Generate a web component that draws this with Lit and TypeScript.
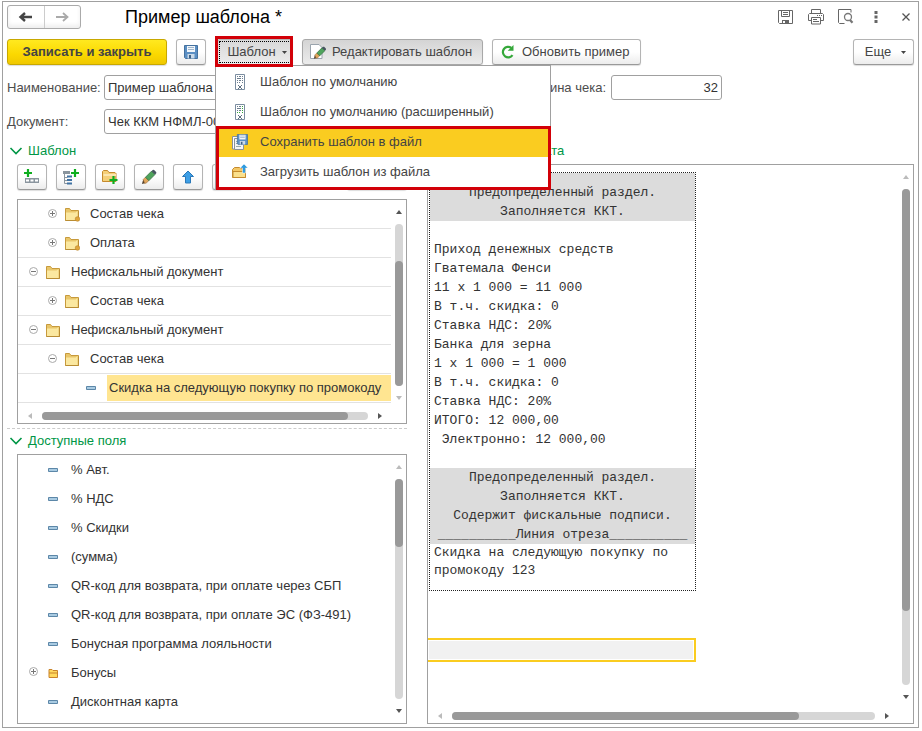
import { LitElement, html, css, svg, nothing } from "lit";
import { customElement, property, state } from "lit/decorators.js";
import { classMap } from "lit/directives/class-map.js";
import { styleMap } from "lit/directives/style-map.js";

const folderBody = svg`
  <path d="M1.500 2.500h4l1.500 2h7.500v10h-13z" fill="#e9c66a" stroke="#c79a3c"/>
  <path d="M2 14v-7.500h9.500l2-1.500v9z" fill="#fbe8a0"/>
  <path d="M1.500 14.500h13v-9" fill="none" stroke="#b98d34"/>`;

const floppy = (x: number, y: number) => svg`
  <g transform="translate(${x} ${y})">
    <path d="M.5.5h13v13h-12l-1-1z" fill="#5b8fc4" stroke="#44719f"/>
    <path d="M3 1h8v6h-8z" fill="#f2f6fa"/>
    <path d="M4 2.500h6M4 4.500h6" stroke="#9fb6cc"/>
    <path d="M3.500 9h7v4.500h-7z" fill="#c9d9e8"/>
    <path d="M5 10h2v3.500h-2z" fill="#3d6288"/>
  </g>`;

const pencil = svg`
  <path d="M1 15l1.200-4.500 3.300 3.300z" fill="#4a3b2a"/>
  <path d="M2.200 10.500l2.300-2.300 3.400 3.400-2.400 2.200-1.800.7z" fill="#e0a65c" stroke="#9a6a34" stroke-width=".6"/>
  <path d="M4.500 8.200l6-6 3.400 3.400-6 6z" fill="#4fa45c" stroke="#2f6b3c" stroke-width=".8"/>
  <path d="M10.500 2.200l1.200-1.200q.7-.5 1.400 0l2 2q.5.700 0 1.400l-1.200 1.200z" fill="#475560"/>`;

const receipt = (mark: string) => svg`
  <path d="M3.500.5h9v15h-9z" fill="#fff" stroke="#7b8da0"/>
  <path d="M5 2.500h1M7 2.500h2M5 4.500h4M5 6.500h1M7 6.500h2" stroke="#6c7d8e"/>
  <path d="M5 8.500h1M7 8.500h1M10 2.500h1M10 4.500h1M10 6.500h1M10 8.500h1" stroke="${mark}"/>
  <path d="M6 11l4 4M10 11l-4 4M7.500 12.500h1" stroke="#5d6f80"/>`;

const icons = {
  back: svg`<path d="M2 8h12M7 4L2.500 8L7 12" fill="none" stroke="#444" stroke-width="2.400"/>`,
  forward: svg`<path d="M2 8h12M9 4l4.500 4L9 12" fill="none" stroke="#aaa" stroke-width="1.800"/>`,
  saveOutline: svg`
    <path d="M.5 1.500h14v13h-13l-1-1z" fill="none" stroke="#666"/>
    <path d="M3.500 1.500v6h8v-6M5 3.500h5M5 5.500h5" fill="none" stroke="#666"/>
    <path d="M4 11h7v4h-7z" fill="#666"/><path d="M5 12h2v2h-2z" fill="#fff"/>`,
  print: svg`
    <path d="M3.500 4.500v-4h9v4M3.500 11.500h-3v-6l1-1h13l1 1v6h-3" fill="none" stroke="#666"/>
    <path d="M3.500 8.500h9v6.500h-9zM5 10.500h4M5 12.500h6M9 6.500h1M11 6.500h1M13 6.500h1" fill="none" stroke="#666"/>`,
  preview: svg`
    <path d="M6.500 14.500h-5l-1-1v-13h12.500v3" fill="none" stroke="#666"/>
    <circle cx="10" cy="8" r="3.500" fill="none" stroke="#777" stroke-width="1.300"/>
    <path d="M12 11l2.500 2.800" stroke="#777" stroke-width="2.200"/>`,
  more: svg`<path d="M6.500 2h3v3h-3zM6.500 6.500h3v3h-3zM6.500 11h3v3h-3z" fill="#666"/>`,
  close: svg`<path d="M4.500 4.500l7 7M11.500 4.500l-7 7" stroke="#555" stroke-width="1.300"/>`,
  save: floppy(1, 1),
  edit: svg`
    <path d="M.5.500h8.500l3 3v11h-11.500z" fill="#fff" stroke="#9aa4ad"/>
    <g transform="translate(3 2) scale(.85)">${pencil}</g>`,
  refresh: svg`
    <path d="M12.500 11.200A5.300 5.300 0 1 1 11.300 3.800" fill="none" stroke="#35a83a" stroke-width="2.200"/>
    <path d="M13.500 1v5.800h-5.800z" fill="#35a83a"/>`,
  addField: svg`
    <path d="M1 9h14v5h-14z" fill="#8a959e"/>
    <path d="M2 11.500h3M6.500 11.500h3M11 11.500h3" stroke="#fff" stroke-width="2"/>
    <path d="M4 0v9M0 4.500h8.500" stroke="#fff" stroke-width="4"/>
    <path d="M4 0v8M0 4h8" stroke="#0fae20" stroke-width="2.200"/>`,
  addGroup: svg`
    <path d="M0 2h7v3h-7z" fill="#8a959e"/>
    <path d="M1.500 5v9.500h3M1.500 8.500h3M1.500 11.500h3" fill="none" stroke="#8a959e"/>
    <path d="M4 7.500h5M4 11h5M4 14.500h5" stroke="#3f72a3" stroke-width="2"/>
    <path d="M12 0v8M8 4h8" stroke="#0fae20" stroke-width="2.200"/>`,
  addFolder: svg`
    <path d="M.5 12.500v-10l1-1h4l1.500 2h6l1 1v8z" fill="#f5cf78" stroke="#c48a2e"/>
    <path d="M1.500 6h12.500" stroke="#fbe6b0" stroke-width="2"/>
    <path d="M11.500 7v8M7.500 11h8" stroke="#0fae20" stroke-width="2.200"/>`,
  pencil,
  up: svg`<path d="M8 2l5.500 5.500h-3v6.500h-5v-6.500h-3z" fill="#3d9fe6" stroke="#2a78b8"/>`,
  down: svg`<path d="M8 14l5.500-5.500h-3v-6.500h-5v6.500h-3z" fill="#3d9fe6" stroke="#2a78b8"/>`,
  receipt: receipt("#6c7d8e"),
  receiptGreen: receipt("#35a83a"),
  saveFile: svg`
    <path d="M.5 2.500h8v12.500h-8z" fill="#fff" stroke="#8a9199"/>
    <path d="M2.500 4.500h9v11h-9z" fill="#f4f5f6" stroke="#8a9199"/>
    <path d="M4 7.500h3M4 9.500h3M4 12.500h5" stroke="#9aa"/>
    <g transform="translate(5 0) scale(.78)">${floppy(0, 0)}</g>`,
  loadFile: svg`
    <path d="M.5 13.500v-8l2-2h5l1 1h5v9z" fill="#f3c765" stroke="#c48a2e"/>
    <path d="M1 7.500h12.500v6h-12.500z" fill="#fbe08c" stroke="#c48a2e"/>
    <path d="M12 0l4 4h-2.500v5h-3v-5h-2.500z" fill="#2f9be0" stroke="#fff" stroke-width=".5"/>`,
  folder: folderBody,
  folderDot: svg`${folderBody}<circle cx="13.500" cy="13" r="2.300" fill="#e0a63c" stroke="#b98328" stroke-width=".6"/>`,
  folderSmall: svg`
    <path d="M4 12.500v-8h3l1 1h4.500v7z" fill="#ffd95e" stroke="#c9832b"/>
    <path d="M4 8h8.500" stroke="#c9832b"/>`,
  item: svg`
    <path d="M3.500 6.500h9v3h-9z" fill="#a9cbe2" stroke="#5c87a8" stroke-linejoin="round"/>`,
};

type IconName = keyof typeof icons;

const icon = (name: IconName) => html`<svg class="icon" viewBox="0 0 16 16" aria-hidden="true">${icons[name]}</svg>`;

interface TreeRow {
  text: string;
  level: number;
  icon: IconName;
  expand?: "plus" | "minus";
  selected?: boolean;
}

const templateRows: TreeRow[] = [
  { text: "Состав чека", level: 2, icon: "folderDot", expand: "plus" },
  { text: "Оплата", level: 2, icon: "folderDot", expand: "plus" },
  { text: "Нефискальный документ", level: 1, icon: "folder", expand: "minus" },
  { text: "Состав чека", level: 2, icon: "folder", expand: "plus" },
  { text: "Нефискальный документ", level: 1, icon: "folder", expand: "minus" },
  { text: "Состав чека", level: 2, icon: "folder", expand: "minus" },
  { text: "Скидка на следующую покупку по промокоду", level: 3, icon: "item", selected: true },
];

const fieldRows: TreeRow[] = [
  { text: "% Авт.", level: 1, icon: "item" },
  { text: "% НДС", level: 1, icon: "item" },
  { text: "% Скидки", level: 1, icon: "item" },
  { text: "(сумма)", level: 1, icon: "item" },
  { text: "QR-код для возврата, при оплате через СБП", level: 1, icon: "item" },
  { text: "QR-код для возврата, при оплате ЭС (ФЗ-491)", level: 1, icon: "item" },
  { text: "Бонусная программа лояльности", level: 1, icon: "item" },
  { text: "Бонусы", level: 1, icon: "folderSmall", expand: "plus" },
  { text: "Дисконтная карта", level: 1, icon: "item" },
];

const menuItems: { text: string; icon: IconName }[] = [
  { text: "Шаблон по умолчанию", icon: "receipt" },
  { text: "Шаблон по умолчанию (расширенный)", icon: "receiptGreen" },
  { text: "Сохранить шаблон в файл", icon: "saveFile" },
  { text: "Загрузить шаблон из файла", icon: "loadFile" },
];

const saleLines = `
Приход денежных средств
Гватемала Фенси
11 x 1 000 = 11 000
В т.ч. скидка: 0
Ставка НДС: 20%
Банка для зерна
1 x 1 000 = 1 000
В т.ч. скидка: 0
Ставка НДС: 20%
ИТОГО: 12 000,00
 Электронно: 12 000,00

`;

@customElement("scroll-bar")
export class ScrollBar extends LitElement {
  @property({ type: Boolean, reflect: true }) horizontal = false;
  @property({ type: Number }) from = 0;
  @property({ type: Number }) size = 50;

  static styles = css`
    :host { display: flex; flex-direction: column; align-items: center; width: 10px; }
    :host([horizontal]) { flex-direction: row; width: auto; height: 8px; }
    .track { flex: 1; display: flex; flex-direction: column; width: 8px; border-radius: 4px; background: #d6d6d6; }
    :host([horizontal]) .track { flex-direction: row; width: auto; height: 8px; }
    .thumb { border-radius: 4px; background: #999; }
    .arrow { flex: none; width: 24px; height: 24px; fill: #555; }
    .off { fill: #bbb; }
  `;

  render() {
    const side = this.horizontal ? "width" : "height";
    const atStart = this.from === 0;
    const atEnd = this.from + this.size >= 100;
    const first = this.horizontal ? "M14 9v6l-4-3z" : "M9 14h6l-3-4z";
    const last = this.horizontal ? "M10 9v6l4-3z" : "M9 10h6l-3 4z";
    return html`
      <svg class=${classMap({ arrow: true, off: atStart })} viewBox="0 0 24 24"><path d=${first} /></svg>
      <div class="track">
        <div style=${styleMap({ [side]: `${this.from}%` })}></div>
        <div class="thumb" style=${styleMap({ [side]: `${this.size}%` })}></div>
      </div>
      <svg class=${classMap({ arrow: true, off: atEnd })} viewBox="0 0 24 24"><path d=${last} /></svg>
    `;
  }
}

@customElement("app-root")
export class AppRoot extends LitElement {
  @state() private menuOpen = true;

  static styles = css`
    :host {
      display: block;
      box-sizing: border-box;
      min-height: 100vh;
      padding: 1px 3px 3px 2px;
      background: #fff;
      color: #333;
      font: 13px/20px "Liberation Sans", Arial, sans-serif;
    }
    * { box-sizing: border-box; }
    button, input { font: inherit; color: inherit; margin: 0; }
    h1, h2, ul, pre, p { margin: 0; padding: 0; font: inherit; list-style: none; }
    .icon { width: 16px; height: 16px; flex: none; display: block; }

    .window { border: 1px solid #a0a0a0; padding: 3px 4px; }

    header { display: flex; align-items: center; height: 24px; margin-bottom: 10px; }
    .nav { display: flex; width: 74px; height: 24px; border: 1px solid #aaa; border-radius: 3px; box-shadow: inset 0 -3px 4px #eee; }
    .nav button { flex: 1; display: flex; align-items: center; justify-content: center; border: 0; background: none; padding: 0; }
    .nav button + button { border-left: 1px solid #ccc; }
    h1 { flex: 1; margin-left: 44px; font-size: 18px; line-height: 24px; color: #000; }
    .tools { display: flex; gap: 14px; }
    .tools button { border: 0; padding: 0; background: none; }

    .bar { display: flex; align-items: center; gap: 9px; height: 26px; }
    .btn {
      display: flex; align-items: center; justify-content: center; gap: 6px;
      height: 26px; padding: 0;
      border: 1px solid #b4b4b4; border-bottom-color: #999; border-radius: 3px;
      background: linear-gradient(#fff 50%, #ececec);
      box-shadow: 0 1px 1px #ddd;
      color: #444; white-space: nowrap;
    }
    .square { width: 30px; }
    .primary { width: 160px; font-weight: bold; background: linear-gradient(#ffe920, #fbd800 60%, #f0c800); border-color: #c8a800; }
    .pressed { background: linear-gradient(#d4d4d4, #ececec); border-color: #a8a8a8; }
    .edit { width: 181px; justify-content: flex-start; padding-left: 7px; }
    .refresh { width: 149px; justify-content: flex-start; padding-left: 7px; }
    .more { width: 61px; margin-left: auto; gap: 10px; padding-left: 4px; }
    .caret { width: 5px; height: 3px; fill: #444; }

    .anchor { position: relative; margin-left: 2px; }
    .anchor .btn { width: 76px; padding-left: 4px; background: linear-gradient(#d8d8d8, #ececec); outline: 1px dotted #000; outline-offset: -3px; }
    .anchor::after { content: ""; position: absolute; inset: -3px 0 -2px -2px; border: 3px solid #d20008; pointer-events: none; z-index: 3; }
    .menu {
      position: absolute; z-index: 2; top: 26px; left: -2px; width: 336px; padding: 1px 0 2px;
      border: 1px solid #a0a0a0; background: #fff;
    }
    .menu button {
      display: flex; align-items: center; gap: 12px; width: 100%; height: 30px; padding: 0 16px;
      border: 0; background: none; color: #444; text-align: left;
    }
    .menu .current { background: #facc20; }
    .marked { position: relative; }
    .marked::after { content: ""; position: absolute; inset: -1px -1px -3px 0; border: 3px solid #d20008; pointer-events: none; }

    .form { display: grid; grid-template-columns: 92px 1fr auto 111px; gap: 9px 5px; max-width: 715px; margin: 10px 0 7px; align-items: center; color: #4d4d4d; }
    .form input { width: 100%; min-width: 0; height: 25px; padding: 0 3px; border: 1px solid #a0a0a0; border-radius: 3px; background: #fff; color: #333; outline: none; }
    .form .num { text-align: right; }
    .len { padding-left: 16px; }

    .main { display: grid; grid-template-columns: 400fr 487fr; gap: 20px; }
    .col { display: flex; flex-direction: column; min-width: 0; }
    .section { display: flex; align-items: center; gap: 5px; height: 20px; margin: 0 0 3px 2px; color: #009646; }
    .chev { width: 14px; height: 8px; fill: none; stroke: #009646; stroke-width: 1.6; }
    .cmds { display: flex; gap: 9px; margin: 0 0 9px 10px; height: 26px; }
    .cmds .more { width: 60px; }
    .panel { border: 1px solid #a0a0a0; background: #fff; min-width: 0; }
    .left .panel { margin-left: 10px; }
    .view { display: grid; grid-template-columns: minmax(0, 1fr) 10px; gap: 3px; padding-right: 2px; }
    .panel .horiz { margin: 0 14px 3px 0; }
    .tree .horiz { margin-top: 9px; }
    .tree .vert { margin-bottom: -7px; }
    .right .vert { margin-bottom: 3px; }
    .row { display: flex; align-items: center; height: 29px; padding-left: 9px; color: #333; white-space: nowrap; }
    .tree .row { border-bottom: 1px solid #e2e2e2; }
    .level2 { padding-left: 28px; }
    .level3 { padding-left: 47px; }
    .toggle { flex: none; width: 13px; height: 13px; margin-right: 5px; padding: 0; border: 0; background: none; display: flex; }
    .toggle svg { width: 13px; height: 13px; fill: none; stroke: #aaa; }
    .toggle .sign { stroke: #777; }
    .row .text { margin-left: 8px; padding: 0 2px; line-height: 26px; }
    .row .selected { flex: 1; background: #ffe591; }
    .split { border: 0; border-top: 1px dashed #ccc; width: 100%; margin: 4px 0 2px; }
    .fields ul { padding-bottom: 7px; }

    .right .panel { flex: 1; display: flex; flex-direction: column; }
    .right .view { flex: 1; }
    .receipt {
      width: 267px; margin: 7px 0 0 1px; border: 1px dotted #222; padding-bottom: 10px;
      font: 13px/19px "Liberation Mono", "Courier New", monospace; color: #333;
    }
    .receipt pre { padding: 0 4px; white-space: pre; }
    .receipt .service { background: #dcdcdc; text-align: center; }
    .receipt .top { padding-top: 10px; }
    .receipt .promo { line-height: 18px; }
    .cell { width: 268px; height: 24px; margin-top: 47px; border: 2px solid #facc20; border-left: 0; padding: 1px; background: #f1f1f1 content-box; }
  `;

  private caret() {
    return html`<svg class="caret" viewBox="0 0 5 3" aria-hidden="true"><path d="M0 0h5l-2.500 3z" /></svg>`;
  }

  private section(title: string) {
    return html`<h2 class="section">
      <svg class="chev" viewBox="0 0 14 8" aria-hidden="true"><path d="M1.500 1l5.500 5.500 5.500-5.500" /></svg>${title}
    </h2>`;
  }

  private row(r: TreeRow) {
    return html`<li class="row level${r.level}">
      ${r.expand
        ? html`<button class="toggle" aria-label=${r.expand === "plus" ? "Развернуть" : "Свернуть"}>
            <svg viewBox="0 0 13 13"><circle cx="6.500" cy="5.500" r="4" /><path class="sign" d=${r.expand === "plus" ? "M4 5.500h5M6.500 3v5" : "M4 5.500h5"} /></svg>
          </button>`
        : html`<span class="toggle"></span>`}
      ${icon(r.icon)}
      <span class=${classMap({ text: true, selected: !!r.selected })}>${r.text}</span>
    </li>`;
  }

  private item(i: number) {
    const m = menuItems[i];
    return html`<button role="menuitem" class=${classMap({ current: i === 2 })}>${icon(m.icon)}${m.text}</button>`;
  }

  private tool(name: IconName, label: string) {
    return html`<button aria-label=${label}>${icon(name)}</button>`;
  }

  private command(name: IconName, label: string) {
    return html`<button class="btn square" aria-label=${label}>${icon(name)}</button>`;
  }

  render() {
    return html`
      <div class="window">
        <header>
          <div class="nav">${this.tool("back", "Назад")}${this.tool("forward", "Вперед")}</div>
          <h1>Пример шаблона *</h1>
          <div class="tools">
            ${this.tool("saveOutline", "Сохранить")}${this.tool("print", "Печать")}${this.tool("preview", "Просмотр")}
            ${this.tool("more", "Меню")}${this.tool("close", "Закрыть")}
          </div>
        </header>

        <div class="bar">
          <button class="btn primary">Записать и закрыть</button>
          ${this.command("save", "Записать")}
          <div class="anchor">
            <button class="btn" aria-haspopup="menu" aria-expanded=${this.menuOpen} @click=${() => (this.menuOpen = !this.menuOpen)}>
              Шаблон ${this.caret()}
            </button>
            ${this.menuOpen
              ? html`<div class="menu" role="menu">
                  ${this.item(0)}${this.item(1)}
                  <div class="marked">${this.item(2)}${this.item(3)}</div>
                </div>`
              : nothing}
          </div>
          <button class="btn pressed edit">${icon("edit")}Редактировать шаблон</button>
          <button class="btn refresh">${icon("refresh")}Обновить пример</button>
          <button class="btn more">Еще ${this.caret()}</button>
        </div>

        <div class="form">
          <label for="name">Наименование:</label>
          <input id="name" .value=${"Пример шаблона"} />
          <label class="len" for="len">Длина чека:</label>
          <input id="len" class="num" .value=${"32"} />
          <label for="doc">Документ:</label>
          <input id="doc" .value=${"Чек ККМ НФМЛ-000001"} />
        </div>

        <div class="main">
          <section class="col left">
            ${this.section("Шаблон")}
            <div class="cmds">
              ${this.command("addField", "Добавить поле")}${this.command("addGroup", "Добавить группу")}
              ${this.command("addFolder", "Добавить папку")}${this.command("pencil", "Изменить")}
              ${this.command("up", "Вверх")}${this.command("down", "Вниз")}
              <button class="btn more" aria-label="Еще">${this.caret()}</button>
            </div>
            <div class="panel tree">
              <div class="view">
                <ul>${templateRows.map((r) => this.row(r))}</ul>
                <scroll-bar class="vert" .from=${23} .size=${77}></scroll-bar>
              </div>
              <scroll-bar class="horiz" horizontal .from=${0} .size=${94}></scroll-bar>
            </div>
            <hr class="split" />
            ${this.section("Доступные поля")}
            <div class="panel fields">
              <div class="view">
                <ul>${fieldRows.map((r) => this.row(r))}</ul>
                <scroll-bar .from=${0} .size=${31}></scroll-bar>
              </div>
            </div>
          </section>

          <section class="col right">
            ${this.section("Пример результата")}
            <div class="panel">
              <div class="view">
                <div>
                  <div class="receipt">
                    <pre class="service top">Предопределенный раздел.
Заполняется ККТ.</pre>
                    <pre>${saleLines}</pre>
                    <pre class="service">Предопределенный раздел.
Заполняется ККТ.
Содержит фискальные подписи.
__________Линия отреза__________</pre>
                    <pre class="promo">Скидка на следующую покупку по
промокоду 123</pre>
                  </div>
                  <div class="cell"></div>
                </div>
                <scroll-bar class="vert" .from=${0} .size=${85}></scroll-bar>
              </div>
              <scroll-bar class="horiz" horizontal .from=${0} .size=${82}></scroll-bar>
            </div>
          </section>
        </div>
      </div>
    `;
  }
}
